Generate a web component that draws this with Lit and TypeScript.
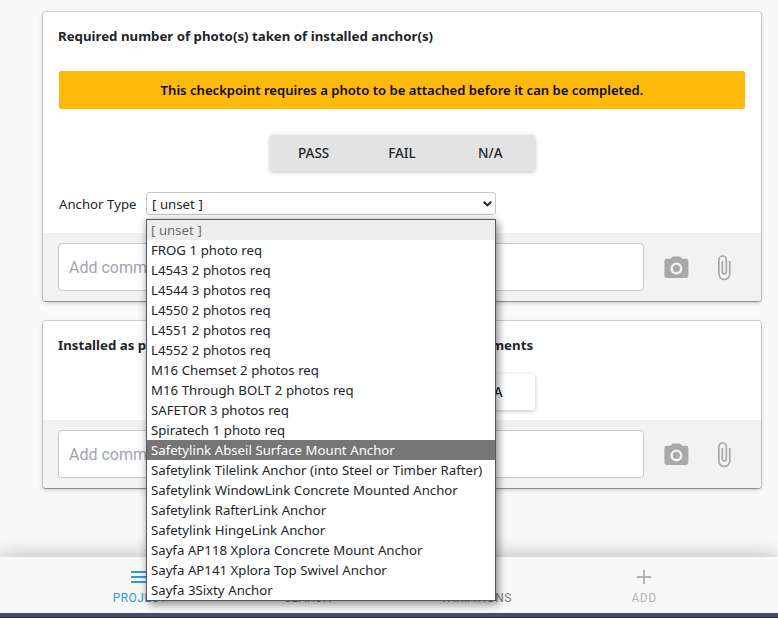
import { LitElement, html, css } from "lit";
import { customElement, property } from "lit/decorators.js";

const CAMERA =
  "M4,4H7L9,2H15L17,4H20A2,2 0 0,1 22,6V18A2,2 0 0,1 20,20H4A2,2 0 0,1 2,18V6A2,2 0 0,1 4,4M12,7A5,5 0 0,0 7,12A5,5 0 0,0 12,17A5,5 0 0,0 17,12A5,5 0 0,0 12,7M12,9A3,3 0 0,1 15,12A3,3 0 0,1 12,15A3,3 0 0,1 9,12A3,3 0 0,1 12,9Z";
const CLIP =
  "M16.5,6V17.5A4,4 0 0,1 12.5,21.5A4,4 0 0,1 8.5,17.5V5A2.5,2.5 0 0,1 11,2.5A2.5,2.5 0 0,1 13.5,5V15.5A1,1 0 0,1 12.5,16.5A1,1 0 0,1 11.5,15.5V6H10V15.5A2.5,2.5 0 0,0 12.5,18A2.5,2.5 0 0,0 15,15.5V5A4,4 0 0,0 11,1A4,4 0 0,0 7,5V17.5A5.5,5.5 0 0,0 12.5,23A5.5,5.5 0 0,0 18,17.5V6H16.5Z";
const MENU = "M3,6H21V8H3V6M3,11H21V13H3V11M3,16H21V18H3V16Z";
const PLUS = "M19,13H13V19H11V13H5V11H11V5H13V11H19V13Z";

const OPTIONS = [
  "[ unset ]",
  "FROG 1 photo req",
  "L4543 2 photos req",
  "L4544 3 photos req",
  "L4550 2 photos req",
  "L4551 2 photos req",
  "L4552 2 photos req",
  "M16 Chemset 2 photos req",
  "M16 Through BOLT 2 photos req",
  "SAFETOR 3 photos req",
  "Spiratech 1 photo req",
  "Safetylink Abseil Surface Mount Anchor",
  "Safetylink Tilelink Anchor (into Steel or Timber Rafter)",
  "Safetylink WindowLink Concrete Mounted Anchor",
  "Safetylink RafterLink Anchor",
  "Safetylink HingeLink Anchor",
  "Sayfa AP118 Xplora Concrete Mount Anchor",
  "Sayfa AP141 Xplora Top Swivel Anchor",
  "Sayfa 3Sixty Anchor",
];
const ACTIVE = 11;

@customElement("comment-bar")
class CommentBar extends LitElement {
  static styles = css`
    :host {
      display: flex;
      align-items: center;
      box-sizing: border-box;
      height: 68px;
      padding: 0 22px 0 15px;
      background: #f2f2f2;
      border-radius: 0 0 3px 3px;
    }
    .field {
      box-sizing: border-box;
      flex: none;
      width: 586px;
      height: 48px;
      border: 1px solid #c8c8c8;
      border-radius: 4px;
      background: #fff;
      padding: 0 10px;
      font: 16px/47px Roboto, sans-serif;
      color: #a2a5b0;
    }
    .icon {
      flex: none;
      width: 28.8px;
      height: 28.8px;
      fill: #a9a9a9;
      margin: 3px 0 0 17.8px;
    }
    .clip {
      width: 27.5px;
      height: 27.5px;
      margin: 1px 0 0 19.2px;
    }
  `;
  render() {
    return html`<div class="field">Add comments</div>
      <svg class="icon" viewBox="0 0 24 24"><path d=${CAMERA}></path></svg>
      <svg class="icon clip" viewBox="0 0 24 24"><path d=${CLIP}></path></svg>`;
  }
}

@customElement("result-buttons")
class ResultButtons extends LitElement {
  @property({ type: Boolean, reflect: true }) disabled = false;
  static styles = css`
    :host {
      display: flex;
      justify-content: center;
      height: 36px;
    }
    .group {
      display: flex;
      width: 265px;
      border-radius: 3px;
      background: #fff;
      box-shadow: 0 1px 4px rgba(0, 0, 0, 0.26);
    }
    :host([disabled]) .group {
      background: #e3e3e3;
    }
    .btn {
      flex: 1;
      text-align: center;
      font: 500 13.5px/36px "Noto Sans", sans-serif;
      color: #212529;
    }
  `;
  render() {
    return html`<div class="group">
      ${["PASS", "FAIL", "N/A"].map((t) => html`<div class="btn">${t}</div>`)}
    </div>`;
  }
}

@customElement("app-root")
class AppRoot extends LitElement {
  static styles = css`
    :host {
      display: flex;
      flex-direction: column;
      box-sizing: border-box;
      position: relative;
      width: 778px;
      height: 618px;
      overflow: hidden;
      background: #f9f9f9;
      font-family: "Noto Sans", sans-serif;
      color: #212529;
    }
    .cards {
      flex: 1;
      display: flex;
      flex-direction: column;
      gap: 20px;
      padding: 12px 17px 0 43px;
    }
    .card {
      display: flex;
      flex-direction: column;
      background: #fff;
      border-radius: 3px;
      box-shadow: 0 0 0 1px rgba(0, 0, 0, 0.14), 0 1px 1px rgba(0, 0, 0, 0.25),
        0 2px 5px rgba(0, 0, 0, 0.18);
    }
    .tall {
      height: 289px;
    }
    .short {
      height: 167px;
    }
    .title {
      padding: 14px 15px 0;
      font-size: 13.25px;
      font-weight: 700;
      line-height: 20px;
      white-space: nowrap;
    }
    .banner {
      margin: 25px 16px 26px;
      height: 38px;
      border-radius: 2px;
      background: #ffb90a;
      color: #0c0c0c;
      text-align: center;
      font-size: 13.1px;
      font-weight: 600;
      line-height: 38px;
    }
    .row {
      display: flex;
      align-items: center;
      margin: 21px 16px 0;
      font-size: 13.2px;
      word-spacing: 0.2px;
    }
    .label {
      width: 87px;
      padding-top: 1px;
      white-space: nowrap;
    }
    .select {
      position: relative;
      box-sizing: border-box;
      width: 350px;
      height: 23px;
      border: 1px solid #c6c6c6;
      border-radius: 3px;
      padding: 0 3px 0 5px;
      line-height: 23px;
      display: flex;
      align-items: center;
      justify-content: space-between;
    }
    .value {
      padding-top: 2px;
    }
    .chev {
      width: 9px;
      height: 6px;
      fill: none;
      stroke: #212529;
      stroke-width: 2;
    }
    .menu {
      position: absolute;
      z-index: 2;
      top: 26px;
      left: -1px;
      width: 348px;
      border: 1px solid #58595b;
      background: #fff;
      box-shadow: 3px 4px 8px rgba(0, 0, 0, 0.32), 0 0 8px rgba(0, 0, 0, 0.22);
    }
    .opt {
      height: 20px;
      padding-left: 4px;
      line-height: 20px;
      white-space: nowrap;
    }
    .opt.unset {
      background: #ededed;
      color: #6d6d6d;
    }
    .opt.active {
      background: #767676;
      color: #fff;
    }
    .grow {
      flex: 1;
    }
    .second {
      margin-top: 19px;
    }
    .nav {
      display: flex;
      justify-content: center;
      height: 56px;
      padding-left: 6px;
      background: #f9f9f9;
      box-shadow: 0 -3px 20px rgba(0, 0, 0, 0.22);
    }
    .tab {
      width: 168px;
      display: flex;
      flex-direction: column;
      align-items: center;
      padding-top: 8px;
      box-sizing: border-box;
      font: 12px/16px Roboto, sans-serif;
      letter-spacing: 0.45px;
      color: #7b7b80;
    }
    .tab svg {
      width: 24px;
      height: 24px;
      fill: currentColor;
      margin-bottom: 1px;
    }
    .on {
      color: #3498db;
    }
    .dim {
      color: #b3b3b3;
    }
    .edge {
      position: relative;
      height: 4px;
      background: #42526b;
      border-bottom: 1px solid #1f2937;
    }
  `;
  render() {
    return html`
      <div class="cards">
        <div class="card tall">
          <div class="title">Required number of photo(s) taken of installed anchor(s)</div>
          <div class="banner">This checkpoint requires a photo to be attached before it can be completed.</div>
          <result-buttons disabled></result-buttons>
          <div class="row">
            <div class="label">Anchor Type</div>
            <div class="select">
              <span class="value">[ unset ]</span>
              <svg class="chev" viewBox="0 0 9 6"><path d="M0.7 0.8L4.5 4.4L8.3 0.8"></path></svg>
              <div class="menu">
                ${OPTIONS.map(
                  (o, i) =>
                    html`<div class="opt ${i === 0 ? "unset" : i === ACTIVE ? "active" : ""}"><span>${o}</span></div>`
                )}
              </div>
            </div>
          </div>
          <div class="grow"></div>
          <comment-bar></comment-bar>
        </div>
        <div class="card short">
          <div class="title">Installed as per the manufacturer's specifications and the requirements</div>
          <result-buttons class="second"></result-buttons>
          <div class="grow"></div>
          <comment-bar></comment-bar>
        </div>
      </div>
      <div class="nav">
        <div class="tab on"><svg viewBox="0 0 24 24"><path d=${MENU}></path></svg>PROJECT</div>
        <div class="tab"><svg viewBox="0 0 24 24"></svg>SEARCH</div>
        <div class="tab"><svg viewBox="0 0 24 24"></svg>VARIATIONS</div>
        <div class="tab dim"><svg viewBox="0 0 24 24"><path d=${PLUS}></path></svg>ADD</div>
      </div>
      <div class="edge"></div>
    `;
  }
}
